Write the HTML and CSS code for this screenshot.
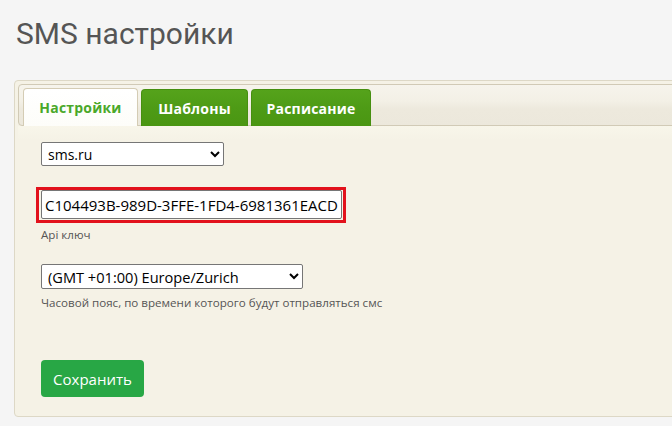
FILE: index.html
```html
<!DOCTYPE html>
<html lang="ru">
<head>
<meta charset="utf-8">
<title>SMS настройки</title>
<link rel="stylesheet" href="styles.css">
</head>
<body>
<div class="page">
  <h1 class="title">SMS настройки</h1>
  <div class="panel">
    <div class="tabs">
      <div class="tab tab-active">Настройки</div>
      <div class="tab tab-green">Шаблоны</div>
      <div class="tab tab-green">Расписание</div>
    </div>
    <div class="content">
      <div class="field field-provider">
        <select class="select select-provider">
          <option>sms.ru</option>
        </select>
      </div>
      <div class="field field-key">
        <div class="highlight">
          <input class="input" type="text" value="C104493B-989D-3FFE-1FD4-6981361EACD5">
        </div>
        <div class="hint">Api ключ</div>
      </div>
      <div class="field field-tz">
        <select class="select select-tz">
          <option>(GMT +01:00) Europe/Zurich</option>
        </select>
        <div class="hint">Часовой пояс, по времени которого будут отправляться смс</div>
      </div>
      <div class="actions">
        <button class="btn-save" type="button">Сохранить</button>
      </div>
    </div>
  </div>
</div>
</body>
</html>
```

FILE: styles.css
```css
html, body {
  margin: 0;
  padding: 0;
  background: #f5f5f5;
  overflow: hidden;
}
.page {
  width: 672px;
  height: 426px;
  padding: 0 0 0 14px;
  box-sizing: border-box;
  overflow: hidden;
  font-family: "Open Sans", "Noto Sans", sans-serif;
}
.title {
  margin: 0;
  padding: 16px 0 0 2px;
  height: 80px;
  box-sizing: border-box;
  font-family: Roboto, "Liberation Sans", sans-serif;
  font-weight: 400;
  font-size: 30px;
  line-height: 36px;
  color: #555;
}
.panel {
  width: 700px;
  height: 337px;
  box-sizing: border-box;
  border: 1px solid #ddd8c6;
  border-radius: 4px;
  background: #f5f2e6;
  padding: 3px 3px 0 3px;
}
.tabs {
  display: flex;
  gap: 3px;
  height: 42px;
  box-sizing: border-box;
  padding: 4px 0 0 4px;
  border: 1px solid #d1cab6;
  border-radius: 4px;
  background: linear-gradient(#f6f4ec 0%, #f3f0e6 40%, #ede9dd 60%, #ece8dc 100%);
  align-items: flex-end;
}
.tab {
  height: 37px;
  box-sizing: border-box;
  margin-bottom: -1px;
  border-radius: 4px 4px 0 0;
  font-size: 14px;
  font-weight: 700;
  display: flex;
  align-items: center;
  justify-content: center;
  letter-spacing: 0.2px;
}
.tab-active {
  width: 115px;
  border: 1px solid #d4ccb4;
  border-bottom: none;
  color: #4aa82a;
  height: 38px;
  margin-bottom: -1px;
  background: linear-gradient(#fff 0%, #fdfdf9 100%);
}
.tab-green {
  background: linear-gradient(#55a31b 0%, #4e9b16 50%, #4a9612 100%);
  border: 1px solid #468f10;
  border-bottom: none;
  color: #fff;
}
.tab-green:nth-child(2) { width: 107px; }
.tab-green:nth-child(3) { width: 120px; }
.content {
  padding: 16px 0 0 23px;
  background: linear-gradient(#f8f6ea 0px, #f5f2e6 14px);
  height: 290px;
  box-sizing: border-box;
}
.field-provider {
  height: 45px;
}
.select {
  font-family: "Open Sans", "Noto Sans", sans-serif;
  color: #000;
  background: #fff;
  border: 1px solid #767676;
  border-radius: 2px;
  box-sizing: border-box;
}
.select-provider {
  width: 183px;
  height: 24px;
  font-size: 14px;
  padding: 0 2px;
}
.field-key {
  height: 77px;
}
.highlight {
  display: inline-block;
  border: 3px solid #e2121c;
  padding: 0 1px 1px 2px;
  margin-left: -5px;
  line-height: 0;
}
.input {
  width: 301px;
  height: 29px;
  box-sizing: border-box;
  border: 1px solid #767676;
  border-radius: 2px;
  padding: 0 3px;
  font-family: "Open Sans", "Noto Sans", sans-serif;
  font-size: 15px;
  color: #000;
  background: #fff;
}
.hint {
  font-size: 11.6px;
  color: #555;
  margin-top: 4px;
  line-height: 15px;
}
.field-tz {
  height: 96px;
}
.select-tz {
  width: 262px;
  height: 25px;
  font-size: 14.6px;
  padding: 0 2px;
}
.field-tz .hint {
  margin-top: 6px;
}
.btn-save {
  width: 103px;
  height: 37px;
  border: none;
  border-radius: 4px;
  background: #28a745;
  color: #fff;
  font-family: "Open Sans", "Noto Sans", sans-serif;
  font-size: 15px;
  padding: 0;
}
```
